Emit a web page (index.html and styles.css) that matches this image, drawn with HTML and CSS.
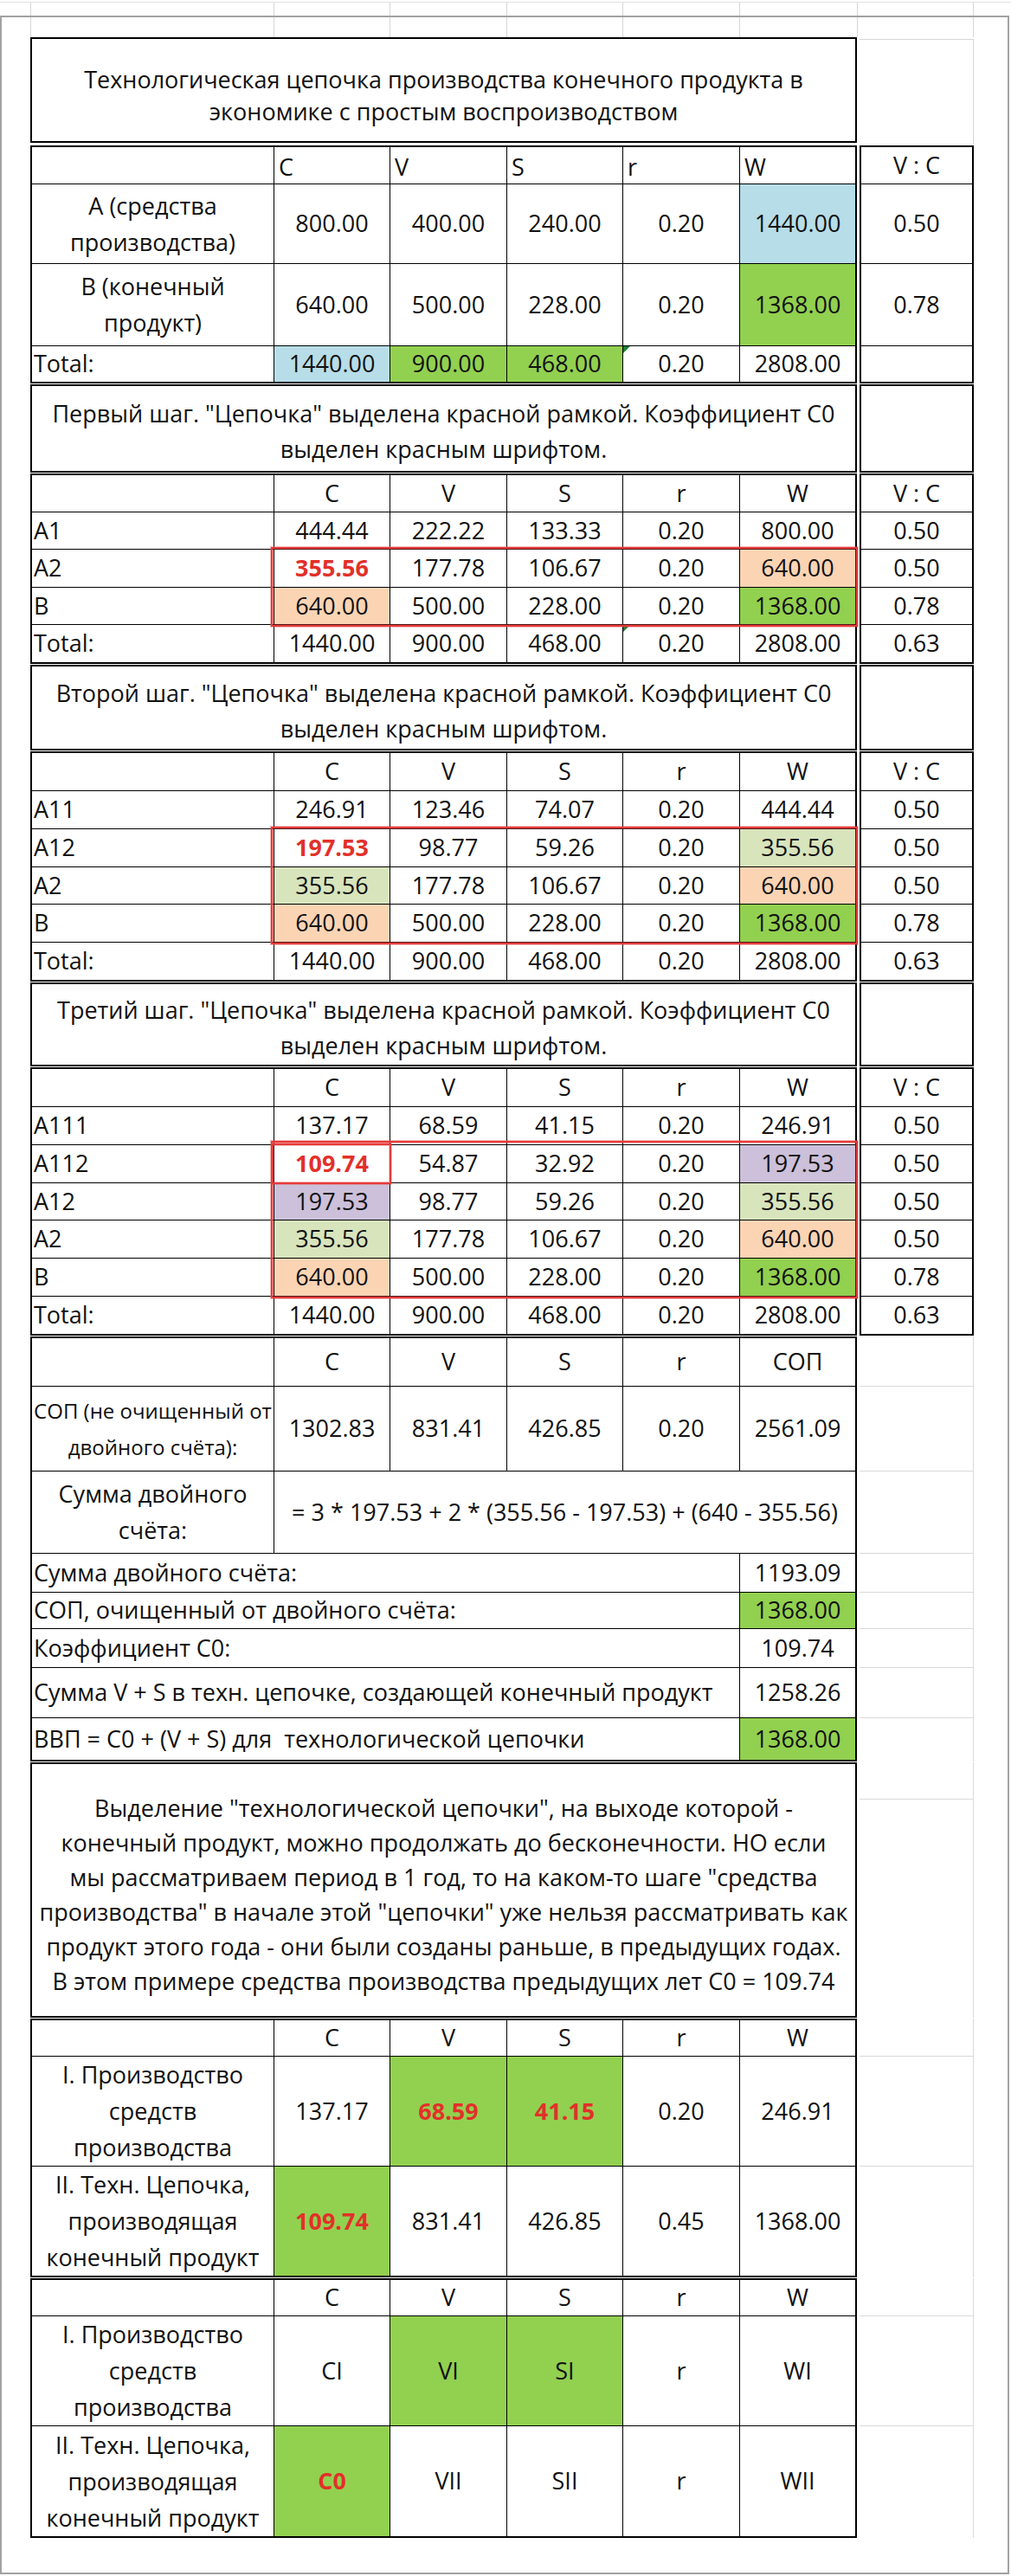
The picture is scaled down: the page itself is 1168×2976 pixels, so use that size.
FILE: index.html
```html
<!DOCTYPE html>
<html lang="ru">
<head>
<meta charset="utf-8">
<title>Технологическая цепочка</title>
<link rel="stylesheet" href="styles.css">
</head>
<body>
<div class="gridstrip outer"><span></span><span></span><span></span><span></span><span></span><span></span><span></span><span></span></div>
<div class="frame">
  <div class="gridstrip inner"><span></span><span></span><span></span><span></span><span></span><span></span><span></span><span></span></div>
  <div class="sheet">

    <section class="sec">
      <div class="txt title h-s1">Технологическая цепочка производства конечного продукта в<br>экономике с простым воспроизводством</div>
      <div class="side-title h-s1"></div>
    </section>

    <section class="sec">
      <div class="tbl t1">
        <div></div><div class="l hl">C</div><div class="l hl">V</div><div class="l hl">S</div><div class="l hl">r</div><div class="l hl">W</div>
        <div class="ml">A (средства<br>производства)</div><div>800.00</div><div>400.00</div><div>240.00</div><div>0.20</div><div class="blue">1440.00</div>
        <div class="ml">B (конечный<br>продукт)</div><div>640.00</div><div>500.00</div><div>228.00</div><div>0.20</div><div class="green">1368.00</div>
        <div class="l">Total:</div><div class="blue">1440.00</div><div class="green">900.00</div><div class="green">468.00</div><div class="tri">0.20</div><div>2808.00</div>
      </div>
      <div class="vc t1">
        <div>V : C</div><div>0.50</div><div>0.78</div><div></div>
      </div>
    </section>

    <section class="sec">
      <div class="txt step h-s3">Первый шаг. "Цепочка" выделена красной рамкой. Коэффициент C0<br>выделен красным шрифтом.</div>
      <div class="sbox h-s3"></div>
    </section>

    <section class="sec">
      <div class="tbl t2">
        <div></div><div>C</div><div>V</div><div>S</div><div>r</div><div>W</div>
        <div class="l">A1</div><div>444.44</div><div>222.22</div><div>133.33</div><div>0.20</div><div>800.00</div>
        <div class="l">A2</div><div class="red">355.56</div><div>177.78</div><div>106.67</div><div>0.20</div><div class="peach">640.00</div>
        <div class="l">B</div><div class="peach">640.00</div><div>500.00</div><div>228.00</div><div>0.20</div><div class="green">1368.00</div>
        <div class="l">Total:</div><div>1440.00</div><div>900.00</div><div>468.00</div><div class="tri">0.20</div><div>2808.00</div>
      </div>
      <div class="vc t2">
        <div>V : C</div><div>0.50</div><div>0.50</div><div>0.78</div><div>0.63</div>
      </div>
      <div class="redframe rf2"></div>
    </section>

    <section class="sec">
      <div class="txt step h-s5">Второй шаг. "Цепочка" выделена красной рамкой. Коэффициент C0<br>выделен красным шрифтом.</div>
      <div class="sbox h-s5"></div>
    </section>

    <section class="sec">
      <div class="tbl t3">
        <div></div><div>C</div><div>V</div><div>S</div><div>r</div><div>W</div>
        <div class="l">A11</div><div>246.91</div><div>123.46</div><div>74.07</div><div>0.20</div><div>444.44</div>
        <div class="l">A12</div><div class="red">197.53</div><div>98.77</div><div>59.26</div><div>0.20</div><div class="lgreen">355.56</div>
        <div class="l">A2</div><div class="lgreen">355.56</div><div>177.78</div><div>106.67</div><div>0.20</div><div class="peach">640.00</div>
        <div class="l">B</div><div class="peach">640.00</div><div>500.00</div><div>228.00</div><div>0.20</div><div class="green">1368.00</div>
        <div class="l">Total:</div><div>1440.00</div><div>900.00</div><div>468.00</div><div>0.20</div><div>2808.00</div>
      </div>
      <div class="vc t3">
        <div>V : C</div><div>0.50</div><div>0.50</div><div>0.50</div><div>0.78</div><div>0.63</div>
      </div>
      <div class="redframe rf3"></div>
    </section>

    <section class="sec">
      <div class="txt step h-s7">Третий шаг. "Цепочка" выделена красной рамкой. Коэффициент C0<br>выделен красным шрифтом.</div>
      <div class="sbox h-s7"></div>
    </section>

    <section class="sec">
      <div class="tbl t4">
        <div></div><div>C</div><div>V</div><div>S</div><div>r</div><div>W</div>
        <div class="l">A111</div><div>137.17</div><div>68.59</div><div>41.15</div><div>0.20</div><div>246.91</div>
        <div class="l">A112</div><div class="red">109.74</div><div>54.87</div><div>32.92</div><div>0.20</div><div class="lav">197.53</div>
        <div class="l">A12</div><div class="lav">197.53</div><div>98.77</div><div>59.26</div><div>0.20</div><div class="lgreen">355.56</div>
        <div class="l">A2</div><div class="lgreen">355.56</div><div>177.78</div><div>106.67</div><div>0.20</div><div class="peach">640.00</div>
        <div class="l">B</div><div class="peach">640.00</div><div>500.00</div><div>228.00</div><div>0.20</div><div class="green">1368.00</div>
        <div class="l">Total:</div><div>1440.00</div><div>900.00</div><div>468.00</div><div>0.20</div><div>2808.00</div>
      </div>
      <div class="vc t4">
        <div>V : C</div><div>0.50</div><div>0.50</div><div>0.50</div><div>0.50</div><div>0.78</div><div>0.63</div>
      </div>
      <div class="redframe rf4"></div>
      <div class="redframe rf4c"></div>
    </section>

    <section class="sec">
      <div class="tbl t9">
        <div></div><div>C</div><div>V</div><div>S</div><div>r</div><div>СОП</div>
        <div class="ml small">СОП (не очищенный от<br>двойного счёта):</div><div>1302.83</div><div>831.41</div><div>426.85</div><div>0.20</div><div>2561.09</div>
        <div class="ml">Сумма двойного<br>счёта:</div><div class="span5">= 3 * 197.53 + 2 * (355.56 - 197.53) + (640 - 355.56)</div>
        <div class="l span5">Сумма двойного счёта:</div><div>1193.09</div>
        <div class="l span5">СОП, очищенный от двойного счёта:</div><div class="green">1368.00</div>
        <div class="l span5">Коэффициент C0:</div><div>109.74</div>
        <div class="l span5">Сумма V + S в техн. цепочке, создающей конечный продукт</div><div>1258.26</div>
        <div class="l span5">ВВП = C0 + (V + S) для&nbsp; технологической цепочки</div><div class="green">1368.00</div>
      </div>
      <div class="lside t9"><div></div><div></div><div></div><div></div><div></div><div></div><div></div><div></div></div>
    </section>

    <section class="sec">
      <div class="txt para h-s10">Выделение "технологической цепочки", на выходе которой -<br>конечный продукт, можно продолжать до бесконечности. НО если<br>мы рассматриваем период в 1 год, то на каком-то шаге "средства<br>производства" в начале этой "цепочки" уже нельзя рассматривать как<br>продукт этого года - они были созданы раньше, в предыдущих годах.<br>В этом примере средства производства предыдущих лет C0 = 109.74</div>
      <div class="lside s10"><div></div><div></div></div>
    </section>

    <section class="sec">
      <div class="tbl t11">
        <div></div><div>C</div><div>V</div><div>S</div><div>r</div><div>W</div>
        <div class="ml">I. Производство<br>средств<br>производства</div><div>137.17</div><div class="green red">68.59</div><div class="green red">41.15</div><div>0.20</div><div>246.91</div>
        <div class="ml">II. Техн. Цепочка,<br>производящая<br>конечный продукт</div><div class="green red">109.74</div><div>831.41</div><div>426.85</div><div>0.45</div><div>1368.00</div>
      </div>
      <div class="lside t11"><div></div><div></div><div></div></div>
    </section>

    <section class="sec">
      <div class="tbl t12">
        <div></div><div>C</div><div>V</div><div>S</div><div>r</div><div>W</div>
        <div class="ml">I. Производство<br>средств<br>производства</div><div>CI</div><div class="green">VI</div><div class="green">SI</div><div>r</div><div>WI</div>
        <div class="ml">II. Техн. Цепочка,<br>производящая<br>конечный продукт</div><div class="green red">C0</div><div>VII</div><div>SII</div><div>r</div><div>WII</div>
      </div>
      <div class="lside t12"><div></div><div></div><div></div></div>
    </section>

  </div>
</div>
</body>
</html>
```

FILE: styles.css
```css
* { box-sizing: border-box; }

html, body {
  margin: 0;
  padding: 0;
}

body {
  width: 1168px;
  height: 2976px;
  overflow: hidden;
  background: #fff;
  color: #111;
  font-family: "Open Sans", "Liberation Sans", sans-serif;
  font-size: 27px;
  line-height: 1.2;
}

/* light Excel gridlines */
.gridstrip {
  display: grid;
  grid-template-columns: 36px 281px 134px 135px 134px 135px 136px 134px;
}
.gridstrip span {
  border-right: 1px solid #d6d6d6;
}
.gridstrip.outer {
  border-top: 1px solid #e2e2e2;
  margin-top: 2px;
  height: 16px;
}
.gridstrip.inner {
  height: 23px;
  grid-template-columns: 34px 281px 134px 135px 134px 135px 136px 134px;
}

.frame {
  width: 1166px;
  height: 2956px;
  border: 2px solid #a2a2a2;
}

.sheet {
  padding-left: 33px;
  display: flex;
  flex-direction: column;
  gap: 1px;
}

.sec {
  position: relative;
  display: flex;
  gap: 3px;
}

/* main tables */
.tbl {
  width: 955px;
  display: grid;
  grid-template-columns: 279px 133px 134px 133px 134px 133px;
  gap: 1px;
  background: #000;
  border: 2px solid #000;
}
.tbl > div,
.vc > div {
  background: #fff;
  display: flex;
  align-items: center;
  justify-content: center;
  text-align: center;
  white-space: nowrap;
}
.tbl > div.l {
  justify-content: flex-start;
  text-align: left;
  padding-left: 2px;
}
.tbl > div.hl {
  padding-left: 5px;
  padding-top: 4px;
}
.ml {
  line-height: 42px;
}
.small {
  font-size: 24px;
}
.span5 {
  grid-column: span 5;
}

/* V : C side column */
.vc {
  width: 132px;
  display: grid;
  grid-template-columns: 1fr;
  gap: 1px;
  background: #000;
  border: 2px solid #000;
}

/* row templates */
.t1 { grid-template-rows: 42px 91px 94px 41px; }
.t2 { grid-template-rows: 42px 42px 43px 42px 43px; }
.t3 { grid-template-rows: 43px 43px 43px 42px 43px 43px; }
.t4 { grid-template-rows: 43px 43px 43px 42px 43px 43px 43px; }
.t9 { grid-template-rows: 55px 97px 94px 44px 41px 44px 57px 48px; }
.t11 { grid-template-rows: 41px 126px 126px; }
.t12 { grid-template-rows: 41px 126px 127px; }
.s10 { grid-template-rows: 40px 250px; }

/* text blocks */
.txt {
  width: 955px;
  border: 2px solid #000;
  display: flex;
  align-items: center;
  justify-content: center;
  text-align: center;
  white-space: nowrap;
}
.title {
  line-height: 37px;
  padding-top: 12px;
}
.step {
  line-height: 41px;
  padding-top: 6px;
}
.para {
  line-height: 40px;
  align-items: flex-start;
  padding-top: 31px;
}
.h-s1 { height: 122px; }
.h-s3 { height: 102px; }
.h-s5 { height: 99px; }
.h-s7 { height: 97px; }
.h-s10 { height: 295px; }

.sbox {
  width: 132px;
  border: 2px solid #000;
}
.side-title {
  width: 132px;
  margin-top: 2px;
  border-top: 1px solid #d6d6d6;
  border-right: 1px solid #d6d6d6;
}

/* light gridline side area */
.lside {
  width: 132px;
  display: grid;
  grid-template-columns: 1fr;
  gap: 1px;
  padding: 2px 0;
  background: #d9d9d9;
  background-clip: content-box;
  border-right: 1px solid #d9d9d9;
}
.lside > div {
  background: #fff;
}

/* fills */
.tbl > div.blue { background: #b7dde8; }
.tbl > div.green { background: #92d050; }
.tbl > div.peach { background: #fbd4b4; }
.tbl > div.lgreen { background: #d8e4bc; }
.tbl > div.lav { background: #ccc0da; }
.red {
  color: #e2302a;
  font-weight: 700;
}

/* Excel error marker */
.tri { position: relative; }
.tri::before {
  content: "";
  position: absolute;
  left: 0;
  top: 0;
  border-top: 8px solid #1e7d36;
  border-right: 8px solid transparent;
}

/* red selection frames */
.redframe {
  position: absolute;
  border: 2px solid #e53b3b;
  box-shadow: 0 0 0 1px rgba(229, 59, 59, 0.35), inset 0 0 0 1px rgba(229, 59, 59, 0.35);
  pointer-events: none;
}
.rf2 { left: 278px; top: 85px; width: 678px; height: 92px; }
.rf3 { left: 278px; top: 87px; width: 678px; height: 136px; }
.rf4 { left: 278px; top: 85px; width: 678px; height: 182px; }
.rf4c { left: 279px; top: 88px; width: 138px; height: 47px; }
```
